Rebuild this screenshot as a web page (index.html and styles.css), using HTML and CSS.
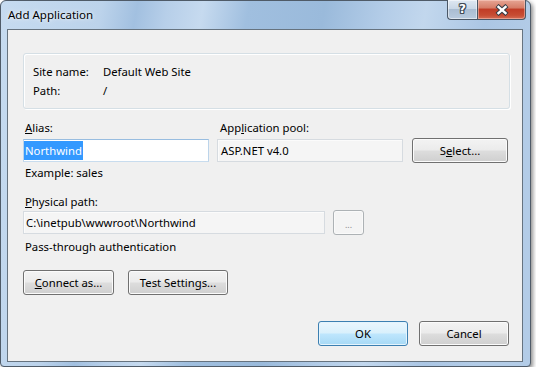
FILE: index.html
```html
<!DOCTYPE html>
<html>
<head>
<meta charset="utf-8">
<title>Add Application</title>
<link rel="stylesheet" href="styles.css">
</head>
<body>
<div class="window">
  <div class="titlebar">
    <span class="title">Add Application</span>
    <div class="caption">
      <div class="cbtn help"><span class="qmark">?</span></div>
      <div class="cbtn close">
        <svg width="16" height="12" viewBox="0 0 16 12">
          <path d="M3 1.5 L13 10.5 M13 1.5 L3 10.5" stroke="#353b44" stroke-width="4.4" fill="none"/>
          <path d="M3.6 2.1 L12.4 9.9 M12.4 2.1 L3.6 9.9" stroke="#ffffff" stroke-width="2.4" fill="none"/>
        </svg>
      </div>
    </div>
  </div>
  <div class="client">
    <div class="group">
      <div class="info-row"><span class="info-label">Site name:</span><span>Default Web Site</span></div>
      <div class="info-row"><span class="info-label">Path:</span><span>/</span></div>
    </div>

    <div class="fields">
      <div class="label"><u>A</u>lias:</div>
      <div class="label pool-label">App<u>l</u>ication pool:</div>
      <div></div>
      <div class="textbox focused"><span class="sel">Northwind</span></div>
      <div class="textbox readonly pool">ASP.NET v4.0</div>
      <div class="btn select">S<u>e</u>lect...</div>
    </div>

    <div class="label example">Example: sales</div>

    <div class="label phys"><u>P</u>hysical path:</div>
    <div class="path-row">
      <div class="textbox readonly path">C:\inetpub\wwwroot\Northwind</div>
      <div class="btn disabled browse">...</div>
    </div>

    <div class="label pass">Pass-through authentication</div>

    <div class="btn-row">
      <div class="btn connect"><u>C</u>onnect as...</div>
      <div class="btn test">Test Settings...</div>
    </div>

    <div class="dialog-btns">
      <div class="btn default ok">OK</div>
      <div class="btn cancel">Cancel</div>
    </div>
  </div>
</div>
</body>
</html>
```

FILE: styles.css
```css
* { box-sizing: border-box; }
html, body { margin: 0; padding: 0; background: #ffffff; }
body {
  font-family: "Noto Sans", "Open Sans", sans-serif;
  font-size: 11.3px;
  color: #000;
}
u { text-decoration: underline; text-underline-offset: 1px; }

.window {
  width: 531px;
  height: 367px;
  border: 1px solid #4f5b68;
  border-radius: 6px 6px 4px 4px;
  background: #b4cde8 linear-gradient(100deg,
    #c6dbf0 0px, #bcd3eb 100px, #a2c0e0 135px, #b7cfe9 165px,
    #c6daef 200px, #a0bfdf 245px, #9abadb 320px, #b4cde8 380px,
    #c2d7ed 420px, #abc6e4 480px, #b3cce7 531px);
  box-shadow: 2px 2px 4px rgba(0,0,0,0.45);
  display: flex;
  flex-direction: column;
}

.titlebar {
  height: 28px;
  display: flex;
  align-items: flex-start;
  padding-left: 7px;
}
.title {
  height: 28px;
  line-height: 28px;
  font-size: 11.5px;
  text-shadow: 0 0 6px rgba(255,255,255,0.7), 0 0 3px rgba(255,255,255,0.7);
}
.caption {
  margin-left: auto;
  margin-right: 4px;
  margin-top: -1px;
  display: flex;
}
.cbtn {
  height: 20px;
  border: 1px solid #4a5766;
  border-top: none;
  display: flex;
  align-items: center;
  justify-content: center;
}
.help {
  width: 30px;
  border-right: none;
  border-radius: 0 0 0 4px;
  background: linear-gradient(#dfe8f2 0%, #c9d7e6 45%, #aabdd2 50%, #b9cbdf 100%);
  box-shadow: inset 0 0 0 1px rgba(255,255,255,0.5);
}
.qmark {
  font-family: "DejaVu Sans", sans-serif;
  font-weight: bold;
  font-size: 12px;
  line-height: 12px;
  color: #fff;
  margin-top: -1px;
  text-shadow: 1px 0 0 #404a56, -1px 0 0 #404a56, 0 1px 0 #404a56, 0 -1px 0 #404a56,
               1px 1px 0 #404a56, -1px -1px 0 #404a56, 1px -1px 0 #404a56, -1px 1px 0 #404a56;
}
.close {
  width: 49px;
  border-radius: 0 0 4px 0;
  background: linear-gradient(#e6a594 0%, #d67e69 40%, #c13d27 50%, #c74c33 80%, #d46d56 100%);
  box-shadow: inset 0 0 0 1px rgba(255,220,210,0.45);
}

.client {
  flex: 1;
  margin: 0 7px 4px 6px;
  border: 1px solid #66737f;
  background: #f0f0f0;
  padding: 23px 13px 15px 15px;
  display: flex;
  flex-direction: column;
}

.group {
  width: 487px;
  height: 56px;
  border: 1px solid #d5dfe5;
  border-radius: 3px;
  box-shadow: inset 1px 1px 0 #ffffff, 1px 1px 0 #ffffff;
  padding: 8px 0 0 9px;
}
.info-row {
  display: flex;
  height: 19px;
  line-height: 19px;
}
.info-label { width: 70px; }

.label {
  height: 16px;
  line-height: 16px;
  padding-left: 2px;
}
.pool-label { padding-left: 3px; }

.fields {
  margin-top: 11px;
  display: grid;
  grid-template-columns: 186px 186px 97px;
  grid-template-rows: 16px 23px;
  column-gap: 8px;
  row-gap: 3px;
}

.textbox {
  height: 23px;
  border: 1px solid #d6dbe0;
  line-height: 21px;
  padding-left: 2px;
  white-space: nowrap;
  overflow: hidden;
}
.focused {
  background: #ffffff;
  border-color: #98bde0 #bcd4ea #c8dcee #bcd4ea;
  padding: 1px 0 0 0;
  line-height: 19px;
}
.sel {
  display: inline-block;
  height: 19px;
  line-height: 19px;
  padding: 0 1px;
  background: #3399ff;
  color: #ffffff;
}
.readonly {
  background: #f5f5f5;
  box-shadow: inset 1px 1px 0 #fbfbfb;
}
.pool { padding-left: 3px; }

.btn {
  height: 25px;
  border: 1px solid #707070;
  border-radius: 3px;
  background: linear-gradient(#f3f3f3 0%, #ebebeb 48%, #dddddd 52%, #cfcfcf 100%);
  box-shadow: inset 0 0 0 1px #fbfbfb;
  display: flex;
  align-items: center;
  justify-content: center;
  line-height: 23px;
  white-space: nowrap;
}
.select {
  margin-left: 1px;
  margin-top: -1px;
}
.example { margin-top: 3px; }
.phys { margin-top: 13px; }

.path-row {
  display: flex;
  align-items: flex-start;
  gap: 8px;
}
.path {
  width: 302px;
  margin-top: 1px;
}
.browse {
  width: 31px;
}
.disabled {
  border-color: #adb2b5;
  background: #f4f4f4;
  box-shadow: inset 0 0 0 1px #fafafa;
  color: #8d8d8d;
  font-size: 9px;
  padding-top: 3px;
}

.pass { margin-top: 4px; }

.btn-row {
  margin-top: 15px;
  display: flex;
  gap: 14px;
}
.connect { width: 91px; }
.test { width: 100px; }

.dialog-btns {
  margin-top: auto;
  display: flex;
  justify-content: flex-end;
  gap: 11px;
}
.ok, .cancel { width: 90px; }
.default {
  border-color: #3c7fb1;
  background: linear-gradient(#eaf6fd 0%, #d9f0fc 48%, #bee6fd 52%, #a7d9f5 100%);
  box-shadow: inset 0 0 0 1px #e4f4fd;
}
```
